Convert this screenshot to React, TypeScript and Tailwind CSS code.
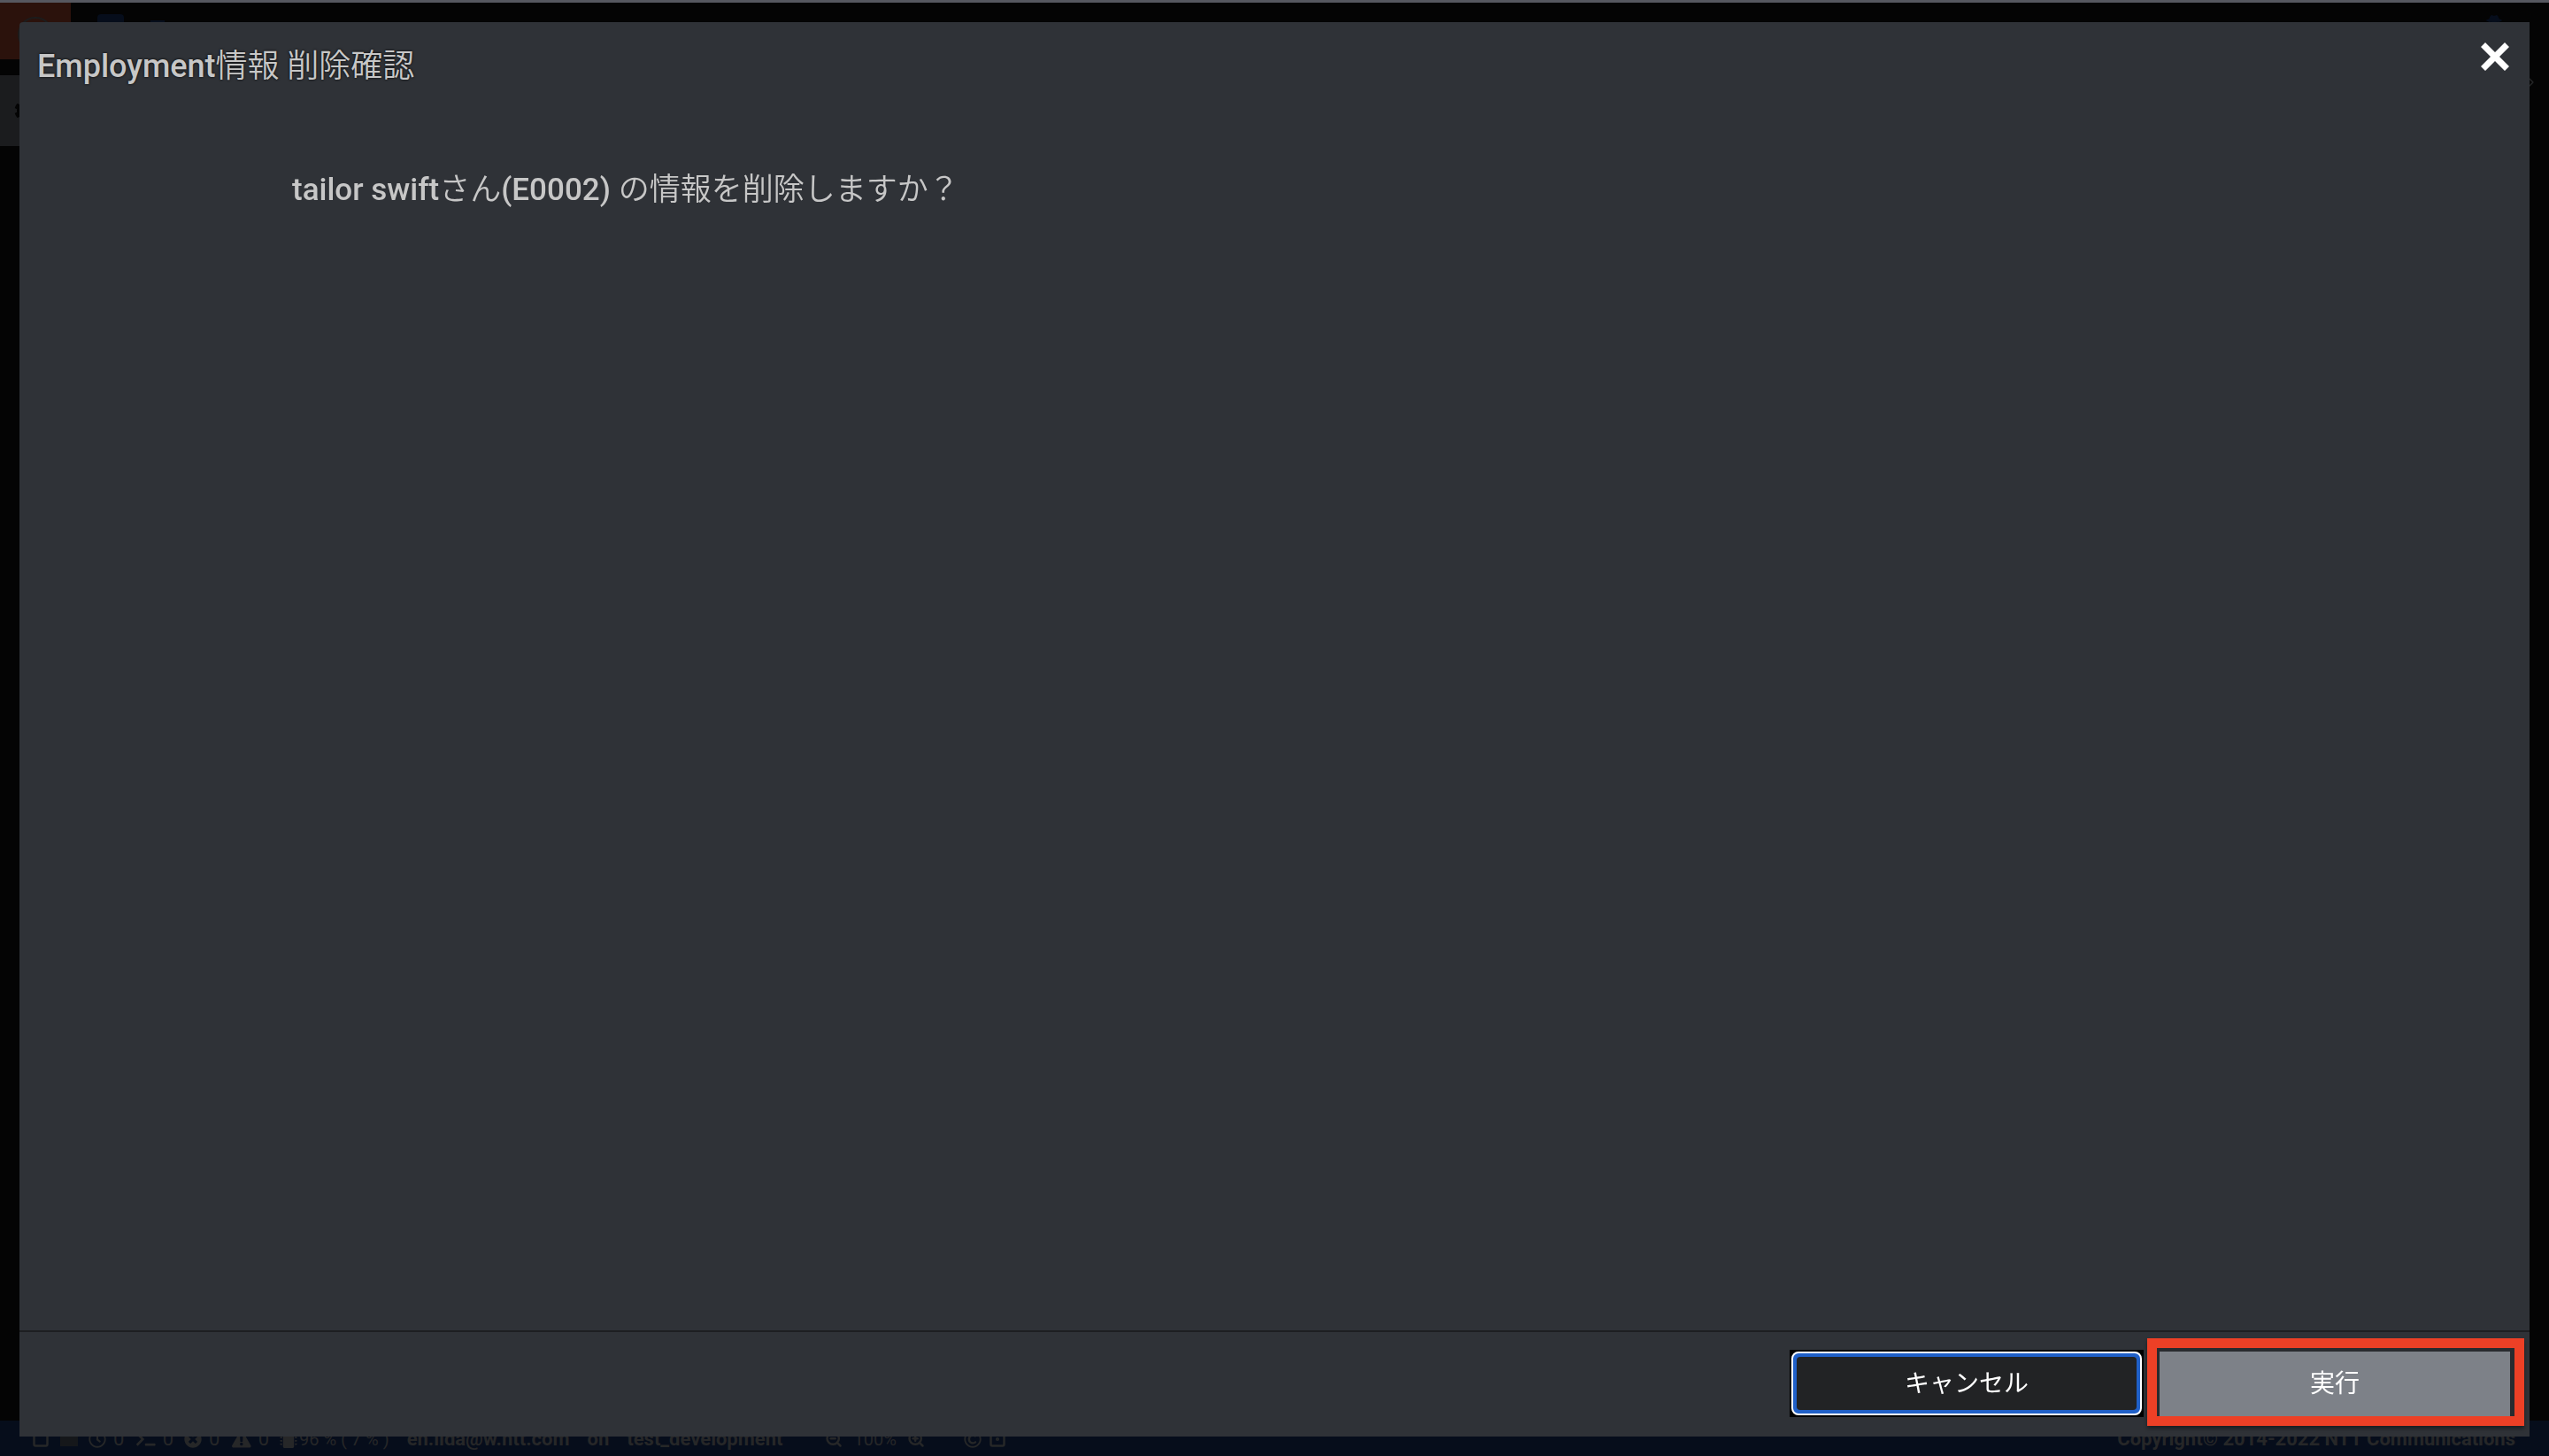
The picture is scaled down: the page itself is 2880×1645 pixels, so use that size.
import {
    FaCog,
    FaExclamationTriangle,
    FaMicrochip,
    FaRegClock,
    FaRegCopyright,
    FaTerminal,
    FaTimesCircle,
    FaUserSecret,
} from 'react-icons/fa';
import { ChevronRight, Square, SquareDot, ZoomIn, ZoomOut } from 'lucide-react';

const counters = [
    { name: 'clock', Icon: FaRegClock, iconClass: 'size-5' },
    { name: 'terminal', Icon: FaTerminal, iconClass: 'size-6' },
    { name: 'errors', Icon: FaTimesCircle, iconClass: 'size-5' },
    { name: 'warnings', Icon: FaExclamationTriangle, iconClass: 'size-6' },
];

function Backdrop() {
    return (
        <div className="flex min-h-screen flex-col bg-[#040404] text-[#262728]">
            {/* Header */}
            <header className="flex h-[67px] items-start justify-between border-t-[3px] border-[#565860] pr-[50px] text-[#060d1b]">
                <div className="flex items-start gap-[30px]">
                    <div className="flex h-16 w-20 justify-center bg-[#2b120c] pt-4">
                        <div className="size-10 rounded-full border-2 border-[#1c1c1c]"></div>
                    </div>
                    <div className="mt-[13px] size-[30px] rounded bg-[#060d1b]"></div>
                    <div className="mt-5 h-5 w-4 bg-[#060d1b]"></div>
                </div>
                <FaUserSecret className="mt-[14px] size-6" />
            </header>

            {/* Side handle */}
            <main className="flex grow items-start justify-between pt-[18px]">
                <div className="flex h-20 w-10 items-center justify-end bg-[#1b1c1e]">
                    <FaCog className="size-6 text-[#040404]" />
                </div>
                <ChevronRight className="mr-3 size-4" />
            </main>

            {/* Status bar */}
            <footer className="flex h-10 items-center justify-between bg-[#060d1b] pt-[2px] pr-[38px] pl-9 text-[22px] leading-10">
                <div className="flex items-center gap-5 font-bold">
                    <div className="flex items-center gap-3 font-normal">
                        <Square className="size-5" strokeWidth={3} />
                        <div className="h-4 w-5 bg-[#15171a]"></div>
                        {counters.map(({ name, Icon, iconClass }) => (
                            <span key={name} className="flex w-[42px] items-center gap-2">
                                <Icon className={iconClass} />0
                            </span>
                        ))}
                        <span className="flex items-center gap-[2px] text-xl leading-10">
                            <FaMicrochip className="size-5" />
                            96 % ( 7 % )
                        </span>
                    </div>
                    <span>en.iida@w.ntt.com</span>
                    <span>on</span>
                    <span>test_development</span>
                    <span className="flex items-center gap-3 pl-7 font-normal">
                        <ZoomOut className="size-5" strokeWidth={3} />
                        <span className="text-xl leading-10">100%</span>
                        <ZoomIn className="size-5" strokeWidth={3} />
                    </span>
                    <span className="flex items-center gap-2 pl-6">
                        <FaRegCopyright className="size-5" />
                        <SquareDot className="size-5" strokeWidth={3} />
                    </span>
                </div>
                <p className="font-bold">Copyright© 2014-2022 NTT Communications</p>
            </footer>
        </div>
    );
}

function DeleteDialog() {
    return (
        <div className="fixed inset-x-[22px] top-[25px] bottom-[22px] flex flex-col rounded-tl bg-[#2f3237]" role="dialog" aria-labelledby="dialog-title">
            <div className="flex items-start justify-between pt-[30px] pr-[22px] pl-5">
                <h2 id="dialog-title" className="text-[36px] leading-10 font-medium text-[#c7c7c7] [text-shadow:0_0_3px_#000]">
                    Employment<span className="font-[350]">情報 削除確認</span>
                </h2>
                <button type="button" aria-label="閉じる" className="-mt-2 text-white">
                    <svg viewBox="0 0 34 34" className="size-[34px]" fill="currentColor">
                        <path d="M6 1L17 12L28 1L33 6L22 17L33 28L28 33L17 22L6 33L1 28L12 17L1 6Z" />
                    </svg>
                </button>
            </div>

            <p className="grow px-[308px] pt-[100px] text-[35px] leading-10 font-medium text-[#c7c7c7]">
                tailor swift<span className="font-[350]">さん</span>(E0002) <span className="font-[350]">の情報を削除しますか？</span>
            </p>

            {/* Actions */}
            <div className="flex h-[120px] items-start justify-end gap-1 border-t-2 border-[#1d1e21] pt-[7px] pr-[6px] text-[28px] text-white [text-shadow:1px_2px_2px_#000]">
                <button type="button" className="mt-[13px] h-[76px] w-[400px] border-2 border-black bg-black">
                    <span className="flex h-full items-center justify-center rounded-lg border-2 border-white bg-[#2060c8] p-1">
                        <span className="flex h-full w-full items-center justify-center rounded bg-[#222325] pt-[2px]">キャンセル</span>
                    </span>
                </button>
                <div className="h-[99px] w-[426px] border-[11px] border-[#ed4026] bg-[#292b2f] pt-1 pr-[5px] pl-[3px] shadow-[0_3px_4px_#0006]">
                    <button type="button" className="h-full w-full bg-[#7d8188]">実行</button>
                </div>
            </div>
        </div>
    );
}

export default function App() {
    return (
        <div className="font-[Roboto,'Noto_Sans_CJK_JP',sans-serif]">
            <Backdrop />
            <DeleteDialog />
        </div>
    );
}
